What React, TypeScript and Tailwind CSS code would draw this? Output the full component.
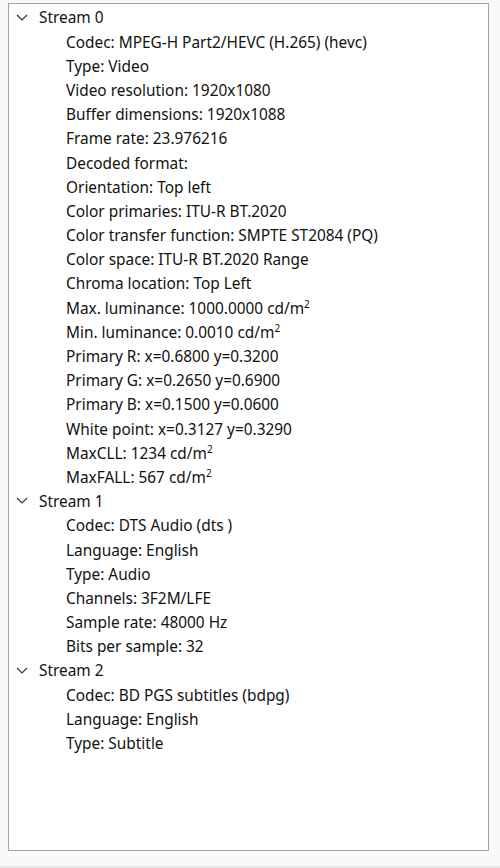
import type { ReactNode } from "react";

type Stream = { title: string; items: ReactNode[] };

const m2 = (
  <>
    cd/m<sup className="text-[10px] -top-[0.55em]">2</sup>
  </>
);

const STREAMS: Stream[] = [
  {
    title: "Stream 0",
    items: [
      "Codec: MPEG-H Part2/HEVC (H.265) (hevc)",
      "Type: Video",
      "Video resolution: 1920x1080",
      "Buffer dimensions: 1920x1088",
      "Frame rate: 23.976216",
      "Decoded format:",
      "Orientation: Top left",
      "Color primaries: ITU-R BT.2020",
      "Color transfer function: SMPTE ST2084 (PQ)",
      "Color space: ITU-R BT.2020 Range",
      "Chroma location: Top Left",
      <>Max. luminance: 1000.0000 {m2}</>,
      <>Min. luminance: 0.0010 {m2}</>,
      "Primary R: x=0.6800 y=0.3200",
      "Primary G: x=0.2650 y=0.6900",
      "Primary B: x=0.1500 y=0.0600",
      "White point: x=0.3127 y=0.3290",
      <>MaxCLL: 1234 {m2}</>,
      <>MaxFALL: 567 {m2}</>,
    ],
  },
  {
    title: "Stream 1",
    items: [
      "Codec: DTS Audio (dts )",
      "Language: English",
      "Type: Audio",
      "Channels: 3F2M/LFE",
      "Sample rate: 48000 Hz",
      "Bits per sample: 32",
    ],
  },
  {
    title: "Stream 2",
    items: ["Codec: BD PGS subtitles (bdpg)", "Language: English", "Type: Subtitle"],
  },
];

function Chevron() {
  return (
    <svg width="12" height="7" viewBox="0 0 12 7" className="shrink-0 -mt-[2px]">
      <path d="M1 1 L6 6 L11 1" fill="none" stroke="#333" strokeWidth="1.2" />
    </svg>
  );
}

function TreeRow({ children, depth }: { children: ReactNode; depth: 0 | 1 }) {
  return (
    <div className={`flex items-center h-[24.2px] whitespace-nowrap ${depth === 0 ? "pl-[7px]" : "pl-[57px]"}`}>
      {depth === 0 && (
        <span className="w-[23px] flex items-center">
          <Chevron />
        </span>
      )}
      <span>{children}</span>
    </div>
  );
}

export default function App() {
  return (
    <div
      className="w-[500px] h-[868px] bg-[#f9f9f9] flex flex-col"
      style={{ fontFamily: '"Noto Sans", "Open Sans", sans-serif' }}
    >
      <div className="flex-1 pt-[3px] pl-[8px] pr-[11px] pb-[15px]">
        <div className="h-full bg-white border border-[#9ea3aa] pt-[2px] text-[15.4px] text-[#111] leading-none">
          {STREAMS.map((s) => (
            <div key={s.title}>
              <TreeRow depth={0}>{s.title}</TreeRow>
              {s.items.map((it, i) => (
                <TreeRow key={i} depth={1}>
                  {it}
                </TreeRow>
              ))}
            </div>
          ))}
        </div>
      </div>
      <div className="h-[2px] bg-[#e6e6e6]" />
    </div>
  );
}
